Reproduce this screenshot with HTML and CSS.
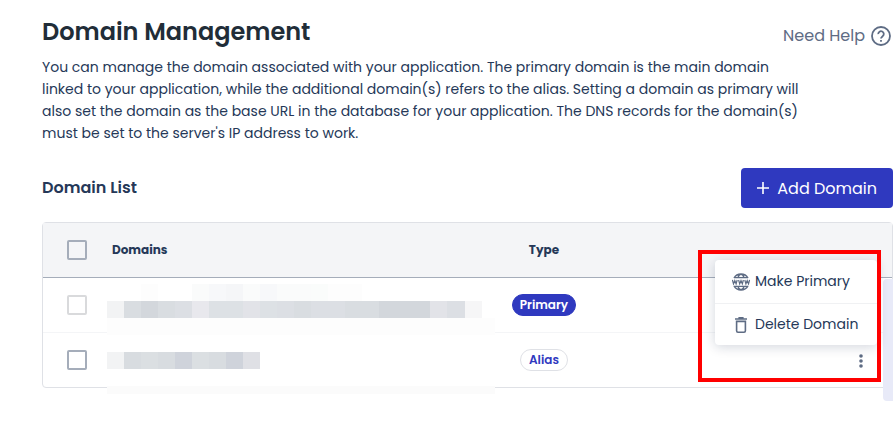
FILE: index.html
```
<!DOCTYPE html>
<html lang="en">
<head>
  <meta charset="UTF-8" />
  <meta name="viewport" content="width=device-width, initial-scale=1.0"/>
  <title>Domain Management</title>
  <link rel="stylesheet" href="styles.css">
</head>
<body>
  <main class="page">
    <header class="page-header">
      <h1>Domain Management</h1>
      <a class="help-link" href="#help">
        Need Help
        <svg width="20" height="20" viewBox="0 0 20 20" fill="none" stroke="currentColor" stroke-width="1.8" aria-hidden="true">
          <circle cx="10" cy="10" r="9"/>
          <path d="M7.2 8.1a2.8 2.8 0 1 1 4.4 2.2c-1 .8-1.6 1.2-1.6 2.3"/>
          <path d="M10 13.9v1.9"/>
        </svg>
      </a>
    </header>

    <p class="intro">
      You can manage the domain associated with your application. The primary domain is the main domain<br>
      linked to your application, while the additional domain(s) refers to the alias. Setting a domain as primary will<br>
      also set the domain as the base URL in the database for your application. The DNS records for the domain(s)<br>
      must be set to the server's IP address to work.
    </p>

    <div class="list-header">
      <h2>Domain List</h2>
      <button class="add-btn" type="button">
        <svg width="12" height="12" viewBox="0 0 12 12" stroke="currentColor" stroke-width="1.6" aria-hidden="true"><path d="M6 0v12M0 6h12"/></svg>
        Add Domain
      </button>
    </div>

    <div class="table-wrap">
      <table class="domain-table">
        <thead>
          <tr>
            <th class="col-check"><input type="checkbox" aria-label="Select all domains"></th>
            <th class="col-domain">Domains</th>
            <th class="col-type">Type</th>
            <th class="col-action"></th>
          </tr>
        </thead>
        <tbody>
          <tr>
            <td class="col-check"><input type="checkbox" aria-label="Select primary domain" disabled></td>
            <td class="col-domain"></td>
            <td class="col-type"><span class="badge primary">Primary</span></td>
            <td class="col-action"></td>
          </tr>
          <tr>
            <td class="col-check"><input type="checkbox" aria-label="Select alias domain"></td>
            <td class="col-domain"></td>
            <td class="col-type"><span class="badge">Alias</span></td>
            <td class="col-action">
              <button class="more-btn" type="button" aria-label="Domain actions">
                <svg width="4" height="14" viewBox="0 0 4 14" fill="currentColor" aria-hidden="true"><circle cx="2" cy="2" r="1.8"/><circle cx="2" cy="7" r="1.8"/><circle cx="2" cy="12" r="1.8"/></svg>
              </button>
            </td>
          </tr>
        </tbody>
      </table>

      <!-- pixelated cover over the domain names -->
      <svg class="redacted" width="388" height="110" viewBox="0 0 388 110" shape-rendering="crispEdges" aria-hidden="true">
        <rect width="388" height="110" fill="#fff"/>
        <path fill="#fdfdfd" d="M34 0h17v17H34zM221 0h34v17h-34zM0 34h388v17H0z"/>
        <path fill="#fafbfb" d="M85 0h17v17H85zM136 0h17v17h-17zM170 0h34v17h-34z"/>
        <path fill="#f7f8fa" d="M102 0h17v17h-17zM153 0h17v17h-17z"/>
        <path fill="#f5f6f8" d="M119 0h17v17h-17z"/>
        <path fill="#fafcfb" d="M204 0h17v17h-17z"/>
        <path fill="#f2f3f4" d="M0 17h17v17H0zM0 68h17v17H0z"/>
        <path fill="#d9dde1" d="M17 17h17v17H17zM51 17h17v17H51zM187 17h17v17h-17zM238 17h34v17h-34z"/>
        <path fill="#d3d7dc" d="M34 17h17v17H34zM272 17h51v17h-51z"/>
        <path fill="#dcdfe4" d="M68 17h17v17H68zM170 17h17v17h-17zM204 17h34v17h-34zM340 17h18v17h-18z"/>
        <path fill="#e8e8ed" d="M85 17h17v17H85z"/>
        <path fill="#dde1e5" d="M102 17h34v17h-34zM153 17h17v17h-17z"/>
        <path fill="#e2e3e8" d="M136 17h17v17h-17zM323 17h17v17h-17z"/>
        <path fill="#f6f6f7" d="M358 17h17v17h-17z"/>
        <path fill="#d8dce0" d="M17 68h17v17H17zM51 68h17v17H51zM102 68h17v17h-17z"/>
        <path fill="#dbdfe2" d="M34 68h17v17H34zM85 68h17v17H85z"/>
        <path fill="#cfd3db" d="M68 68h17v17H68zM119 68h17v17h-17z"/>
        <path fill="#dfe0e5" d="M136 68h17v17h-17z"/>
        <path fill="#fbfbfb" d="M0 102h388v8H0z"/>
      </svg>

      <div class="scroll-panel"></div>

      <div class="action-menu">
        <button type="button">
          <svg width="18" height="18" viewBox="0 0 18 18" fill="none" stroke="currentColor" stroke-width="1.4" aria-hidden="true">
            <path d="M2 5.2a8 8 0 0 1 14 0M2 12.8a8 8 0 0 0 14 0M3 4.6h12M3 13.4h12M6 4.6C6.6 2.4 7.6 1.2 9 1.2s2.4 1.2 3 3.4M6 13.4c.6 2.2 1.6 3.4 3 3.4s2.4-1.2 3-3.4"/>
            <path stroke-width="1.2" d="M.4 7l1.1 3.8L2.8 7.6l1.3 3.2L5.2 7M6.6 7l1.1 3.8L9 7.6l1.3 3.2L11.4 7M12.8 7l1.1 3.8 1.3-3.2 1.3 3.2L17.6 7"/>
          </svg>
          Make Primary
        </button>
        <button type="button">
          <svg width="18" height="18" viewBox="0 0 18 18" fill="none" stroke="currentColor" stroke-width="1.6" aria-hidden="true">
            <path d="M3 3h12M6.4 1.8h5.2M4.6 5.4h8.8v9.4a1.4 1.4 0 0 1-1.4 1.4H6a1.4 1.4 0 0 1-1.4-1.4z"/>
          </svg>
          Delete Domain
        </button>
      </div>

      <div class="highlight"></div>
    </div>
  </main>
</body>
</html>
```
FILE: styles.css
```
* {
  box-sizing: border-box;
}

body {
  margin: 0;
  background: #fff;
  color: #253858;
  font-family: Poppins, Inter, sans-serif;
  font-size: 14px;
}

button {
  font-family: inherit;
  border: none;
  cursor: pointer;
}

.page {
  padding: 14px 0 24px 42px;
}

.page-header {
  display: flex;
  justify-content: space-between;
  align-items: center;
}

h1 {
  margin: 0;
  font-size: 24px;
  font-weight: 600;
  line-height: 36px;
  color: #212d38;
}

.help-link {
  display: flex;
  align-items: center;
  gap: 6px;
  padding: 8px 2px 0 0;
  font-size: 16px;
  line-height: 28px;
  color: #5e6c84;
  text-decoration: none;
}

.intro {
  margin: 6px 0 0;
  line-height: 22px;
  white-space: nowrap;
}

.list-header {
  display: flex;
  justify-content: space-between;
  align-items: center;
  margin: 24px 0 14px;
}

h2 {
  margin: 0;
  padding-bottom: 2px;
  font-size: 16px;
  font-weight: 600;
}

.add-btn {
  display: flex;
  align-items: center;
  gap: 8px;
  height: 40px;
  padding: 0 16px;
  background: #2f39bf;
  color: #fff;
  font-size: 16px;
  border-radius: 4px;
}

.table-wrap {
  position: relative;
}

.domain-table {
  width: 100%;
  table-layout: fixed;
  border-collapse: separate;
  border-spacing: 0;
  border: 1px solid #dfe1e6;
  border-radius: 4px;
}

th,
td {
  height: 55px;
  padding: 0;
  text-align: left;
}

th {
  background: #f4f5f7;
  border-bottom: 1px solid #a5adba;
  font-size: 12px;
  font-weight: 700;
}

tbody tr:first-child td {
  border-bottom: 1px solid #f4f5f7;
}

tbody tr:last-child td {
  height: 54px;
}

.col-check {
  width: 69px;
  padding-left: 24px;
}

.col-domain {
  width: 44%;
}

.col-type {
  width: 14%;
  padding-right: 2px;
  text-align: center;
}

td.col-action {
  padding: 4px 25px 0 0;
  text-align: right;
}

input[type="checkbox"] {
  appearance: none;
  display: block;
  width: 20px;
  height: 20px;
  margin: 0;
  border: 2px solid #a5adba;
  border-radius: 2px;
}

input[type="checkbox"]:disabled {
  border-color: #d9dadc;
}

.badge {
  display: inline-block;
  padding: 0 8px;
  border: 1px solid #dfe1e6;
  border-radius: 11px;
  font-size: 12px;
  font-weight: 600;
  line-height: 20px;
  color: #2f39bf;
}

.badge.primary {
  padding: 0 7px;
  background: #2f39bf;
  border-color: #2f39bf;
  color: #fff;
}

.more-btn {
  padding: 4px;
  background: none;
  color: #5e6c84;
}

.more-btn svg {
  display: block;
}

.redacted {
  position: absolute;
  top: 62px;
  left: 65px;
}

.scroll-panel {
  position: absolute;
  top: 57px;
  right: 0;
  width: 10px;
  height: 122px;
  background: #e8eaf8;
  border-radius: 4px 0 0 4px;
}

.action-menu {
  position: absolute;
  top: 38px;
  right: 16px;
  width: 162px;
  background: #fff;
  border-radius: 4px;
  box-shadow: 0 2px 12px rgba(9, 30, 66, 0.18);
}

.action-menu button {
  display: flex;
  align-items: center;
  gap: 5px;
  width: 100%;
  height: 43px;
  padding: 0 0 0 17px;
  background: none;
  color: #253858;
  font-size: 14px;
  white-space: nowrap;
}

.action-menu button + button {
  height: 42px;
  border-top: 1px solid #f0f1f3;
}

.action-menu svg {
  color: #5e6c84;
}

.highlight {
  position: absolute;
  top: 28px;
  right: 12px;
  width: 183px;
  height: 132px;
  border: 4px solid #f00;
  pointer-events: none;
}
```
